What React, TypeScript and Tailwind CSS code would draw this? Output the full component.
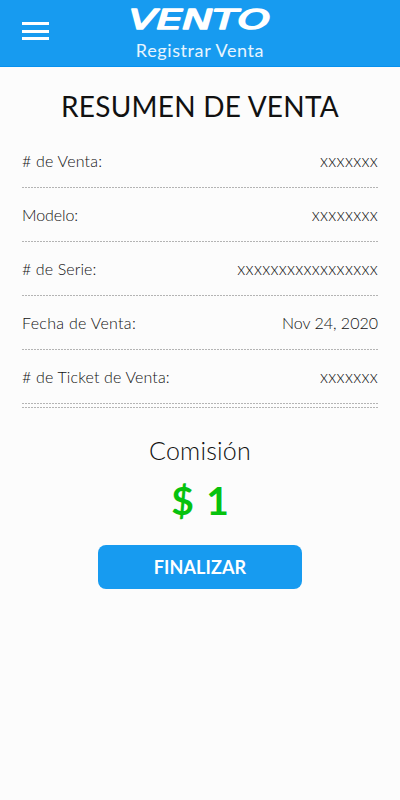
const rows = [
  { label: '# de Venta:', value: 'xxxxxxx', labelClass: 'tracking-[0.2px]', valueClass: 'text-[17px] tracking-[0.3px]' },
  { label: 'Modelo:', value: 'xxxxxxxx', labelClass: 'tracking-[-0.1px]', valueClass: 'text-[17px] tracking-[0.3px]' },
  { label: '# de Serie:', value: 'xxxxxxxxxxxxxxxxx', labelClass: 'tracking-[0.1px]', valueClass: 'text-[17px] tracking-[0.3px]' },
  { label: 'Fecha de Venta:', value: 'Nov 24, 2020', labelClass: 'tracking-[0.3px]', valueClass: 'tracking-[0px]' },
  { label: '# de Ticket de Venta:', value: 'xxxxxxx', labelClass: 'tracking-[0.15px]', valueClass: 'text-[17px] tracking-[0.3px]' },
]

function DashedLine() {
  return (
    <svg className="block h-px w-full" aria-hidden="true">
      <line x1="0" y1="0.5" x2="100%" y2="0.5" stroke="#b4b4b4" strokeWidth="1" strokeDasharray="2 1" />
    </svg>
  )
}

function Logo() {
  return (
    <svg className="block h-[38px] w-[150px] overflow-visible" viewBox="0 0 150 38">
      <text
        x="4"
        y="29"
        textLength="141"
        lengthAdjust="spacingAndGlyphs"
        fill="#fff"
        stroke="#fff"
        strokeWidth="1.6"
        strokeLinejoin="round"
        fontFamily="'DejaVu Sans', sans-serif"
        fontSize="27"
        fontStyle="italic"
      >
        VENTO
      </text>
    </svg>
  )
}

export default function App() {
  return (
    <main className="min-h-screen w-full bg-[#fcfcfc] font-['Lato',sans-serif] text-[#111]">
      {/* Header */}
      <header className="grid h-[67px] grid-cols-[1fr_150px_1fr] bg-[#179bf0] border-b border-[#0791ee]">
        <button aria-label="Menu" className="ml-[22px] mt-[22px] flex h-[18px] w-[27px] flex-col justify-between">
          <span className="h-[3px] w-full bg-white" />
          <span className="h-[3px] w-full bg-white" />
          <span className="h-[3px] w-full bg-white" />
        </button>
        <div className="flex flex-col items-center">
          <Logo />
          <p className="whitespace-nowrap text-[18px] leading-6 tracking-[0.6px] text-white/90">Registrar Venta</p>
        </div>
      </header>

      <section className="px-[22px]">
        <h1 className="mt-[19px] whitespace-nowrap text-center text-[28px] leading-10 tracking-[0.25px]">
          RESUMEN DE VENTA
        </h1>

        {/* Sale details */}
        <dl className="mt-[8px]">
          {rows.map((row) => (
            <div key={row.label}>
              <div className="flex h-[53px] items-center justify-between text-base font-light">
                <dt className={row.labelClass}>{row.label}</dt>
                <dd className={row.valueClass}>{row.value}</dd>
              </div>
              <DashedLine />
            </div>
          ))}
        </dl>
        <div className="mt-[3px]">
          <DashedLine />
        </div>

        {/* Commission */}
        <div className="mt-[26px] flex flex-col items-center">
          <p className="text-[25px] font-light leading-8 tracking-[0.2px]">Comisión</p>
          <p className="mt-[10px] text-[39px] font-bold leading-12 text-[#06c20d] [word-spacing:3px]">$ 1</p>
          <button className="mt-[21px] h-[44px] w-[204px] rounded-lg bg-[#179bf0] text-[18px] font-bold tracking-[0.1px] text-white">
            FINALIZAR
          </button>
        </div>
      </section>
    </main>
  )
}
